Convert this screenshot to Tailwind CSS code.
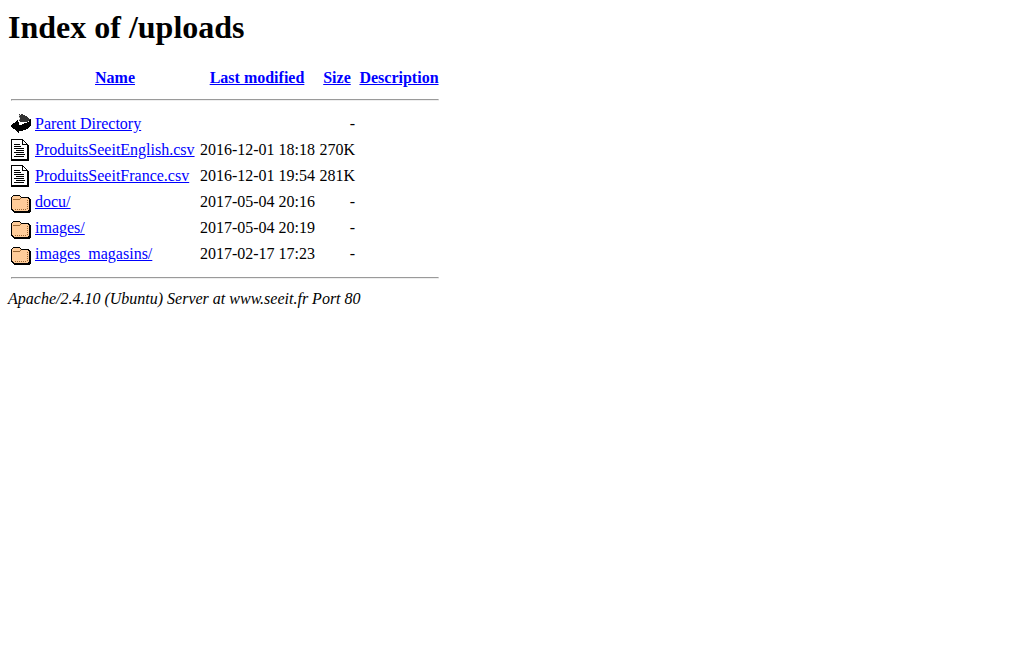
<!DOCTYPE html>
<html lang="en">
<head>
<meta charset="utf-8">
<meta name="viewport" content="width=device-width, initial-scale=1">
<title>Index of /uploads</title>
<script src="https://cdn.jsdelivr.net/npm/@tailwindcss/browser@4"></script>
</head>
<body class="bg-white p-2 text-base/[18px] text-black font-['Liberation_Serif','Times_New_Roman',serif]">
<svg class="hidden" aria-hidden="true">
  <symbol id="back" viewBox="0 0 20 22" shape-rendering="crispEdges">
    <path fill="#333" d="M8 1h1v1h1v-1h2v1h2v1h2v1h1v1h1v1h1v2h-2v1h-8v-1h-1v-2h1v-2h-1z"/>
    <path fill="#aaa" d="M8 2h1v1h-1zM8 4h1v1h-1zM8 6h1v1h-1z"/>
    <path fill="#000" d="M7 9h1v3h3v-1h2v-1h3v-1h2v-2h1v-1h1v7h-1v1h-1v1h-1v1h-2v1h-3v1h-4v2h-1v-1h-1v-1h-1v-1h-1v-1h-2v-1h-1v-1h-1v-2h1v-1h1v-1h2v-1h1v-1h1v-1h1z"/>
  </symbol>
  <symbol id="file" viewBox="0 0 20 22" shape-rendering="crispEdges">
    <path fill="#000" d="M0 0h12v1h1v1h1v1h1v1h1v1h1v1h1v16h-18z"/>
    <path fill="#fff" d="M1 1h10v5h5v14h-15zM12 2h1v1h1v1h1v1h-3z"/>
    <path fill="#000" d="M3 5h6v1h-6zM3 7h7v1h-7zM3 9h10v1h-10zM5 11h8v1h-8zM3 13h10v1h-10zM5 15h9v1h-9zM3 17h10v1h-10z"/>
  </symbol>
  <symbol id="folder" viewBox="0 0 20 22" shape-rendering="crispEdges">
    <path fill="#000" d="M2 4h7v1h1v1h8v1h1v1h1v13h-1v1h-16v-1h-1v-1h-1v-1h-1v-13h1v-1h1z"/>
    <path fill="#fc9" d="M2 5h7v1h1v1h7v1h1v11h-1v1h-14v-1h-1v-1h-1v-12h1z"/>
    <path fill="#963" d="M2 8h7v1h-7zM9 7h1v1h-1zM16 9h1v1h-1zM16 11h1v1h-1zM16 13h1v1h-1zM16 15h1v1h-1zM16 17h1v1h-1zM14 18h1v1h-1zM12 18h1v1h-1zM10 18h1v1h-1zM8 18h1v1h-1zM6 18h1v1h-1zM4 18h1v1h-1z"/>
  </symbol>
</svg>
<h1 class="mb-4 text-[32px]/[38px] font-bold">Index of /uploads</h1>
<table class="border-separate border-spacing-0.5 whitespace-nowrap [&_td]:p-px [&_th]:p-px [&_td]:align-top [&_a]:text-[#0000ff] [&_a]:underline">
  <thead>
    <tr class="h-6">
      <th></th>
      <th class="w-[162px] pt-1!"><a href="?C=N;O=D">Name</a></th>
      <th class="w-[118px] pt-1!"><a href="?C=M;O=A">Last modified</a></th>
      <th class="w-[38px] pt-1!"><a href="?C=S;O=A">Size</a></th>
      <th class="w-[82px] pt-1!"><a href="?C=D;O=A">Description</a></th>
    </tr>
    <tr><th colspan="5"><hr class="my-2 h-0.5 border border-[#9a9a9a] border-r-[#eee] border-b-[#eee]"></th></tr>
  </thead>
  <tbody>
    <tr><td><svg class="block h-[22px] w-5" role="img" aria-label="Parent"><use href="#back"/></svg></td><td class="pt-[3px]!"><a href="/">Parent Directory</a></td><td></td><td class="pt-[3px]! text-right">-</td><td></td></tr>
    <tr><td><svg class="block h-[22px] w-5" role="img" aria-label="File"><use href="#file"/></svg></td><td class="pt-[3px]!"><a href="ProduitsSeeitEnglish.csv">ProduitsSeeitEnglish.csv</a></td><td class="pt-[3px]! text-right">2016-12-01 18:18</td><td class="pt-[3px]! text-right">270K</td><td></td></tr>
    <tr><td><svg class="block h-[22px] w-5" role="img" aria-label="File"><use href="#file"/></svg></td><td class="pt-[3px]!"><a href="ProduitsSeeitFrance.csv">ProduitsSeeitFrance.csv</a></td><td class="pt-[3px]! text-right">2016-12-01 19:54</td><td class="pt-[3px]! text-right">281K</td><td></td></tr>
    <tr><td><svg class="block h-[22px] w-5" role="img" aria-label="Folder"><use href="#folder"/></svg></td><td class="pt-[3px]!"><a href="docu/">docu/</a></td><td class="pt-[3px]! text-right">2017-05-04 20:16</td><td class="pt-[3px]! text-right">-</td><td></td></tr>
    <tr><td><svg class="block h-[22px] w-5" role="img" aria-label="Folder"><use href="#folder"/></svg></td><td class="pt-[3px]!"><a href="images/">images/</a></td><td class="pt-[3px]! text-right">2017-05-04 20:19</td><td class="pt-[3px]! text-right">-</td><td></td></tr>
    <tr><td><svg class="block h-[22px] w-5" role="img" aria-label="Folder"><use href="#folder"/></svg></td><td class="pt-[3px]!"><a href="images_magasins/">images_magasins/</a></td><td class="pt-[3px]! text-right">2017-02-17 17:23</td><td class="pt-[3px]! text-right">-</td><td></td></tr>
  </tbody>
  <tfoot>
    <tr><th colspan="5"><hr class="my-2 h-0.5 border border-[#9a9a9a] border-r-[#eee] border-b-[#eee]"></th></tr>
  </tfoot>
</table>
<address class="italic">Apache/2.4.10 (Ubuntu) Server at www.seeit.fr Port 80</address>
</body>
</html>
